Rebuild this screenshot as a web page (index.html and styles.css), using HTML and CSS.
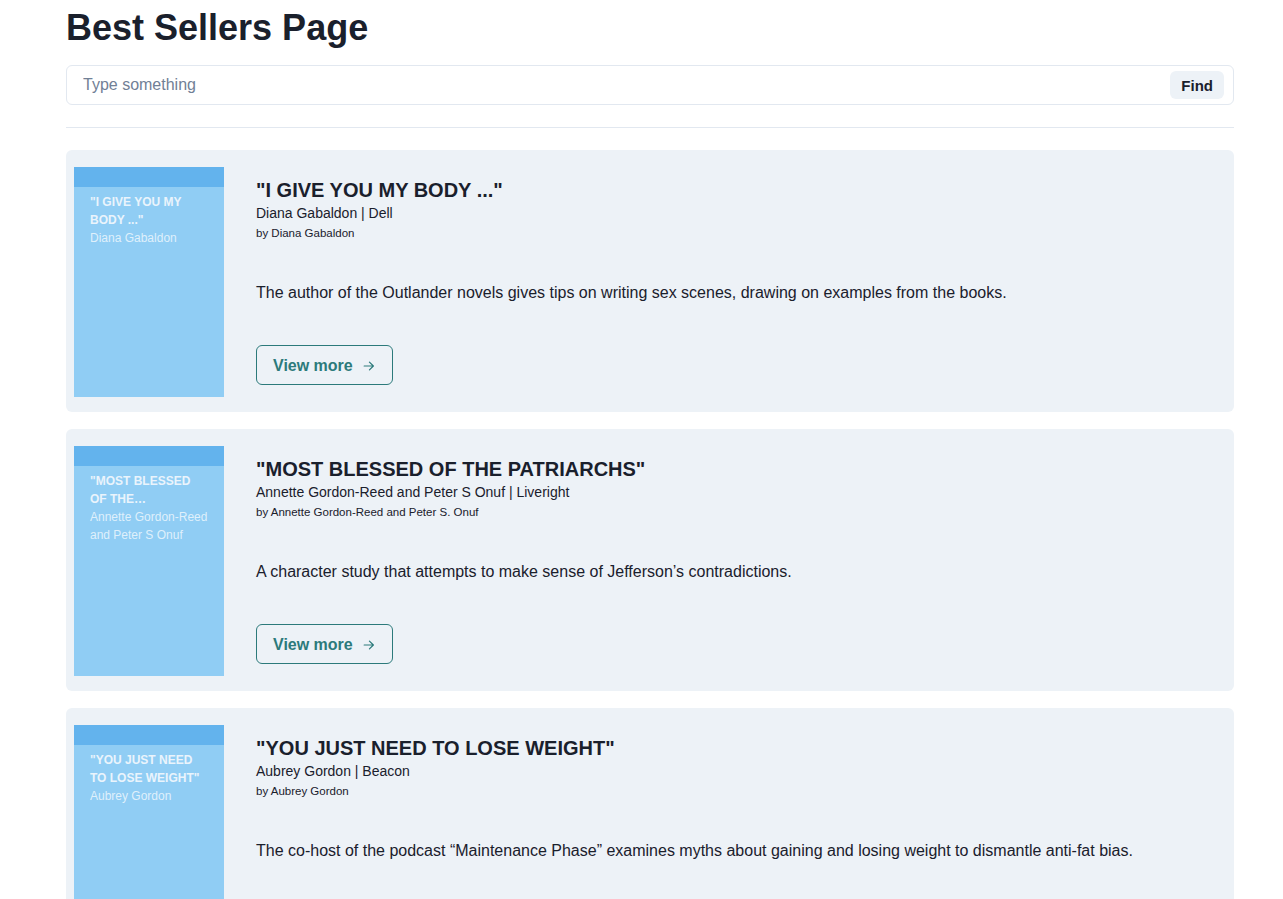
FILE: index.html
```html
<!DOCTYPE html>
<html lang="en">
<head>
<meta charset="utf-8">
<title>Best Sellers Page</title>
<link rel="stylesheet" href="styles.css">
</head>
<body>
<main class="page">
  <h1 class="page-title">Best Sellers Page</h1>
  <div class="search">
    <input class="search-input" type="text" placeholder="Type something">
    <button class="find-btn" type="button">Find</button>
  </div>
  <hr class="divider">

  <div class="list">
    <article class="card">
      <div class="cover">
        <div class="cover-band"></div>
        <div class="cover-text">
          <div class="cover-title">"I GIVE YOU MY BODY ..."</div>
          <div class="cover-author">Diana Gabaldon</div>
        </div>
      </div>
      <div class="content">
        <div class="head">
          <h2 class="title">"I GIVE YOU MY BODY ..."</h2>
          <p class="meta">Diana Gabaldon | Dell</p>
          <p class="by">by Diana Gabaldon</p>
        </div>
        <p class="desc">The author of the Outlander novels gives tips on writing sex scenes, drawing on examples from the books.</p>
        <button class="more-btn" type="button">View more
          <svg class="arrow" viewBox="0 0 16 16" width="14" height="14" aria-hidden="true"><path d="M2.5 8h10.5M8.5 3.5 13 8l-4.5 4.5" fill="none" stroke="currentColor" stroke-width="1.4" stroke-linecap="round" stroke-linejoin="round"/></svg>
        </button>
      </div>
    </article>

    <article class="card">
      <div class="cover">
        <div class="cover-band"></div>
        <div class="cover-text">
          <div class="cover-title">"MOST BLESSED OF THE…</div>
          <div class="cover-author">Annette Gordon-Reed and Peter S Onuf</div>
        </div>
      </div>
      <div class="content">
        <div class="head">
          <h2 class="title">"MOST BLESSED OF THE PATRIARCHS"</h2>
          <p class="meta">Annette Gordon-Reed and Peter S Onuf | Liveright</p>
          <p class="by">by Annette Gordon-Reed and Peter S. Onuf</p>
        </div>
        <p class="desc">A character study that attempts to make sense of Jefferson’s contradictions.</p>
        <button class="more-btn" type="button">View more
          <svg class="arrow" viewBox="0 0 16 16" width="14" height="14" aria-hidden="true"><path d="M2.5 8h10.5M8.5 3.5 13 8l-4.5 4.5" fill="none" stroke="currentColor" stroke-width="1.4" stroke-linecap="round" stroke-linejoin="round"/></svg>
        </button>
      </div>
    </article>

    <article class="card">
      <div class="cover">
        <div class="cover-band"></div>
        <div class="cover-text">
          <div class="cover-title">"YOU JUST NEED TO LOSE WEIGHT"</div>
          <div class="cover-author">Aubrey Gordon</div>
        </div>
      </div>
      <div class="content">
        <div class="head">
          <h2 class="title">"YOU JUST NEED TO LOSE WEIGHT"</h2>
          <p class="meta">Aubrey Gordon | Beacon</p>
          <p class="by">by Aubrey Gordon</p>
        </div>
        <p class="desc">The co-host of the podcast “Maintenance Phase” examines myths about gaining and losing weight to dismantle anti-fat bias.</p>
        <button class="more-btn" type="button">View more
          <svg class="arrow" viewBox="0 0 16 16" width="14" height="14" aria-hidden="true"><path d="M2.5 8h10.5M8.5 3.5 13 8l-4.5 4.5" fill="none" stroke="currentColor" stroke-width="1.4" stroke-linecap="round" stroke-linejoin="round"/></svg>
        </button>
      </div>
    </article>
  </div>
</main>
</body>
</html>
```

FILE: styles.css
```css
* { box-sizing: border-box; }

html, body {
  margin: 0;
  padding: 0;
  background: #ffffff;
}

body {
  font-family: "Liberation Sans", Arial, sans-serif;
  color: #1a202c;
}

.page {
  width: 1168px;
  margin-left: 66px;
  padding-top: 6px;
  padding-bottom: 40px;
}

.page-title {
  margin: 0;
  font-size: 36px;
  line-height: 43px;
  font-weight: 700;
  color: #1a202c;
}

.search {
  margin-top: 16px;
  height: 40px;
  border: 1px solid #e2e8f0;
  border-radius: 6px;
  display: flex;
  align-items: center;
  padding: 0 9px 0 16px;
}

.search-input {
  flex: 1;
  border: none;
  outline: none;
  background: transparent;
  font-family: inherit;
  font-size: 16px;
  color: #1a202c;
  padding: 0;
  height: 100%;
}

.search-input::placeholder {
  color: #718096;
}

.find-btn {
  height: 28px;
  padding: 0 11px;
  border: none;
  border-radius: 6px;
  background: #edf2f7;
  color: #1a202c;
  font-family: inherit;
  font-size: 15px;
  font-weight: 700;
}

.divider {
  margin: 22px 0 0;
  border: none;
  border-top: 1px solid #e2e8f0;
  height: 0;
}

.list {
  margin-top: 22px;
  display: flex;
  flex-direction: column;
  gap: 17px;
}

.card {
  background: #edf2f7;
  border-radius: 6px;
  padding: 17px 8px 15px;
  display: flex;
  align-items: flex-start;
}

.cover {
  width: 150px;
  height: 230px;
  flex: none;
  background: #90cdf4;
  display: flex;
  flex-direction: column;
}

.cover-band {
  height: 20px;
  background: #63b3ed;
}

.cover-text {
  padding: 6px 16px 0;
  font-size: 12px;
  line-height: 18px;
}

.cover-title {
  font-weight: 700;
  color: #eaf4fc;
}

.cover-author {
  color: rgba(255, 255, 255, 0.72);
}

.content {
  margin-left: 32px;
  padding-top: 11px;
  flex: 1;
  display: flex;
  flex-direction: column;
  align-items: flex-start;
}

.head { display: flex; flex-direction: column; }

.title {
  margin: 0;
  font-size: 20px;
  line-height: 24px;
  font-weight: 700;
}

.meta {
  margin: 1px 0 0;
  font-size: 14px;
  line-height: 20px;
}

.by {
  margin: 1px 0 0;
  font-size: 11.5px;
  line-height: 19px;
}

.desc {
  margin: 38px 0 0;
  font-size: 16px;
  line-height: 24px;
}

.more-btn {
  margin-top: 40px;
  height: 40px;
  padding: 1px 16px 0 16px;
  display: inline-flex;
  align-items: center;
  gap: 9px;
  border: 1px solid #2c7a7b;
  border-radius: 6px;
  background: transparent;
  color: #2c7a7b;
  font-family: inherit;
  font-size: 16px;
  font-weight: 700;
}

.arrow { display: block; }
```
